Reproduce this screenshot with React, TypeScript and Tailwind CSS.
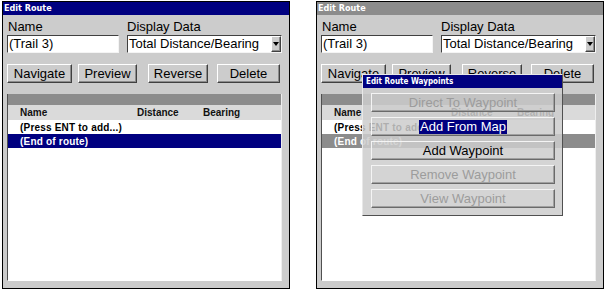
const sans = "font-['Liberation_Sans',Arial,sans-serif]";
const narrow =
  "font-['Liberation_Sans_Narrow','DejaVu_Sans_Condensed','Liberation_Sans',sans-serif]";

const raised =
  "border border-t-white border-l-white border-b-[#404040] border-r-[#404040] shadow-[inset_-1px_-1px_0_#8c8c8c]";
const sunken =
  "border border-t-[#404040] border-l-[#404040] border-b-[#f4f4f4] border-r-[#f4f4f4]";

function Field(props: { label: string; value: string; width: string; select?: boolean; labelPad?: string }) {
  return (
    <div className={`flex flex-col ${props.width}`}>
      <span className={`text-[13px] leading-[15px] text-black ${props.labelPad ?? ""}`}>
        {props.label}
      </span>
      <div className={`mt-[1px] h-[18px] bg-white flex items-center ${sunken}`}>
        <span className="flex-1 pl-[1px] text-[13px] leading-[16px] text-black whitespace-nowrap overflow-hidden">
          {props.value}
        </span>
        {props.select && (
          <div className={`h-full w-[10px] bg-[#cccccc] flex items-center justify-center ${raised}`}>
            <svg width="6" height="4" viewBox="0 0 6 4">
              <path d="M0 0 L6 0 L3 4 Z" fill="#000" />
            </svg>
          </div>
        )}
      </div>
    </div>
  );
}

function Button(props: { label: string; width: string; ml?: string }) {
  return (
    <div
      className={`h-[19px] ${props.width} ${props.ml ?? ""} bg-[#cccccc] flex items-center justify-center text-[13px] text-black ${raised}`}
    >
      {props.label}
    </div>
  );
}

function Panel(props: { active: boolean }) {
  const pick = props.active ? "bg-[#000080]" : "bg-[#8c8c8c]";
  return (
    <div className={`relative w-[288px] h-[288px] border border-black bg-[#cccccc] flex flex-col ${sans}`}>
      <div className={`h-[13px] ${pick} text-white text-[9px] font-bold leading-[13px] pl-[1px] ${narrow}`}>
        Edit Route
      </div>

      <div className="flex-1 flex flex-col pl-[4px] pr-[5px] pt-[4px] pb-[7px]">
        <div className="flex">
          <Field label="Name" value="(Trail 3)" width="w-[112px]" labelPad="pl-[1px]" />
          <Field
            label="Display Data"
            value="Total Distance/Bearing"
            width="w-[155px] ml-[8px]"
            select
          />
        </div>

        <div className="flex mt-[11px]">
          <Button label="Navigate" width="w-[65px]" />
          <Button label="Preview" width="w-[59px]" ml="ml-[6px]" />
          <Button label="Reverse" width="w-[60px]" ml="ml-[11px]" />
          <Button label="Delete" width="w-[63px]" ml="ml-[9px]" />
        </div>

        <div className="mt-[11px] w-[275px] flex-1 flex flex-col border-l border-l-[#505050] border-b border-b-white border-r border-r-[#eeeeee]">
          <div className="h-[11px] bg-[#8c8c8c]" />
          <div className="h-[15px] bg-[#dadada] flex items-center text-[10px] font-bold text-[#111] pl-[12px]">
            <span className="w-[117px]">Name</span>
            <span className="w-[66px]">Distance</span>
            <span>Bearing</span>
          </div>
          <div className="flex-1 bg-white flex flex-col text-[10px] font-bold tracking-[0.2px]">
            <div className="h-[14px] flex items-center pl-[12px] text-black">(Press ENT to add...)</div>
            <div className={`h-[14px] flex items-center pl-[12px] text-white ${pick}`}>(End of route)</div>
          </div>
        </div>
      </div>

      {!props.active && <WaypointMenu />}
    </div>
  );
}

function MenuItem(props: { label: string; state: "off" | "on" | "sel" }) {
  return (
    <div
      className={`h-[19px] flex items-center justify-center text-[13px] border border-t-[#f4f4f4] border-l-[#f4f4f4] border-b-[#6a6a6a] border-r-[#6a6a6a] shadow-[inset_-1px_-1px_0_#a0a0a0] ${
        props.state === "off" ? "text-[#9c9c9c]" : "text-black"
      }`}
    >
      {props.state === "sel" ? (
        <span className="bg-[#000080] text-white px-[1px] leading-[14px]">{props.label}</span>
      ) : (
        props.label
      )}
    </div>
  );
}

function WaypointMenu() {
  return (
    <div className="absolute left-[45px] top-[72px] w-[201px] h-[142px] flex flex-col border border-t-[#e8e8e8] border-l-[#e8e8e8] border-b-[#505050] border-r-[#505050]">
      <div className={`h-[13px] bg-[#000080] text-white text-[8px] font-bold leading-[13px] pl-[3px] ${narrow}`}>
        Edit Route Waypoints
      </div>
      <div className="flex-1 bg-[#cccccc]/85 flex flex-col gap-[5px] pl-[8px] pr-[7px] pt-[5px]">
        <MenuItem label="Direct To Waypoint" state="off" />
        <MenuItem label="Add From Map" state="sel" />
        <MenuItem label="Add Waypoint" state="on" />
        <MenuItem label="Remove Waypoint" state="off" />
        <MenuItem label="View Waypoint" state="off" />
      </div>
    </div>
  );
}

export default function App() {
  return (
    <main className="w-[607px] h-[290px] bg-white flex gap-[26px] pl-[2px] pt-[1px]">
      <Panel active />
      <Panel active={false} />
    </main>
  );
}
